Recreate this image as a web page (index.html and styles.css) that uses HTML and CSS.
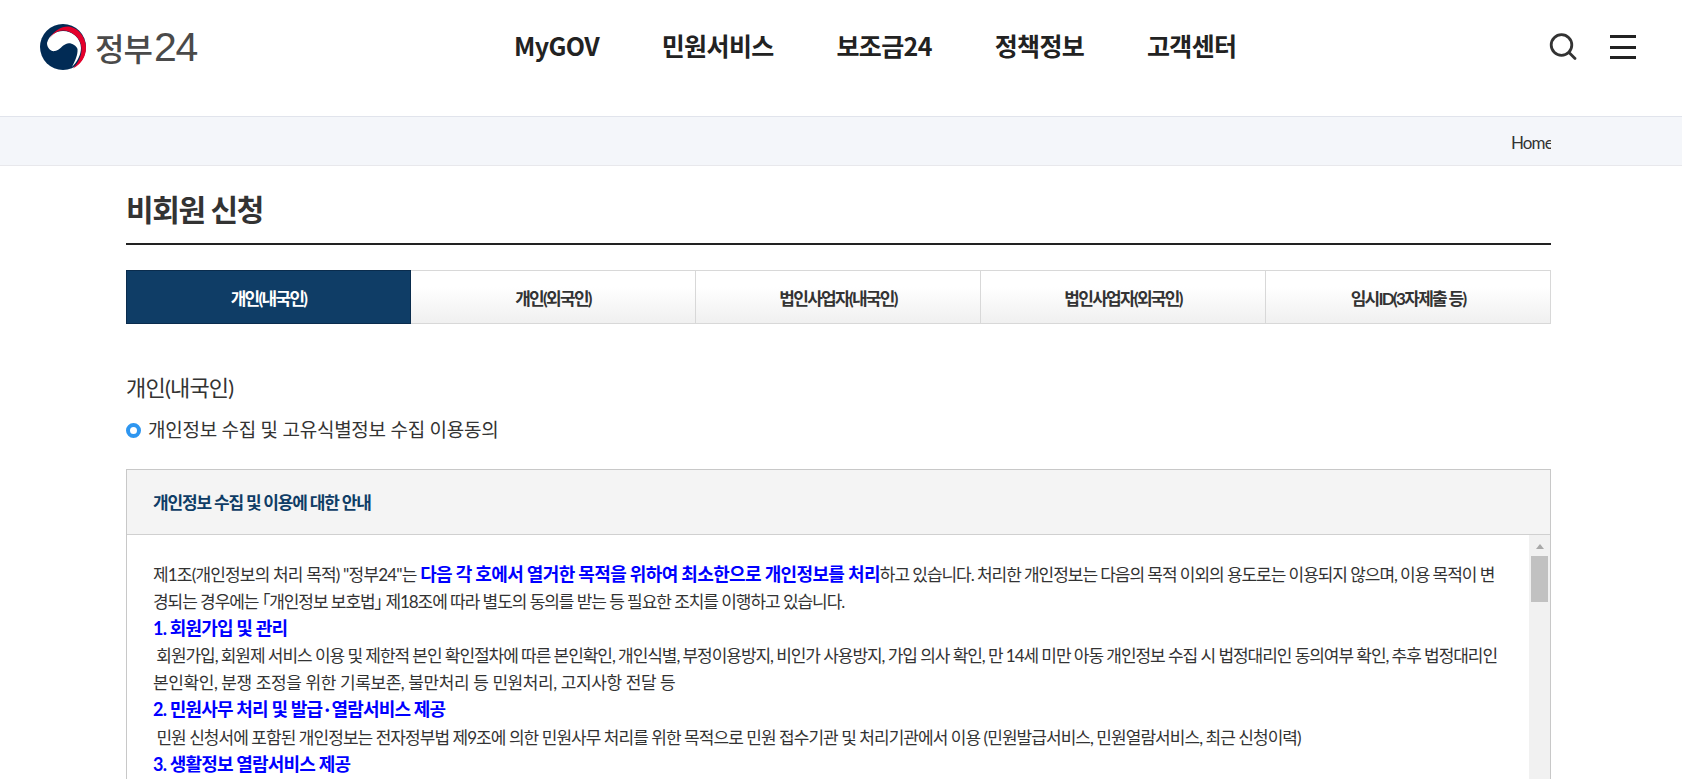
FILE: index.html
```html
<!DOCTYPE html>
<html lang="ko">
<head>
<meta charset="utf-8">
<title>비회원 신청 | 정부24</title>
<link rel="stylesheet" href="styles.css">
</head>
<body>
<header class="site-header">
  <a class="logo" href="#">
    <svg class="logo-mark" width="54" height="54" viewBox="0 0 54 54">
      <circle cx="27" cy="27" r="23" fill="#012b55"/>
      <path d="M11 23 C13 15 20 11 27 11 C36 11 45 18 45 28 C45 35 41 42 36 47 C39 41 42 35 41.500 29 C40 25 34 22 30 24 C26 25.500 24 30 19 31 C15 32 11 28 11 23 Z" fill="#fff"/>
      <path d="M13 19.500 C18 10 26 6 33 6.500 C43 8 50 18 50 28 C50 37 45 44 37 48.500 C42 43 46 36 45.500 28 C45 17 35 10.500 27 10.500 C21 10.500 16 14.500 13 19.500 Z" fill="#e4002b"/>
    </svg>
    <span class="logo-text">정부<span class="logo-num">24</span></span>
  </a>
  <nav class="gnb">
    <a href="#">MyGOV</a>
    <a href="#">민원서비스</a>
    <a href="#">보조금24</a>
    <a href="#">정책정보</a>
    <a href="#">고객센터</a>
  </nav>
  <div class="header-tools">
    <svg width="28" height="28" viewBox="0 0 28 28" fill="none" stroke="#333" stroke-width="2.800">
      <circle cx="12.500" cy="12" r="10.300"/>
      <path d="M20 19.500 L26 25.500" stroke-linecap="round"/>
    </svg>
    <div class="hamburger"><i></i><i></i><i></i></div>
  </div>
</header>
<div class="crumb-bar"><div class="crumb-inner">Home</div></div>
<main class="content">
  <h1 class="page-title">비회원 신청</h1>
  <ul class="tabs">
    <li class="tab active">개인(내국인)</li>
    <li class="tab">개인(외국인)</li>
    <li class="tab">법인사업자(내국인)</li>
    <li class="tab">법인사업자(외국인)</li>
    <li class="tab">임시ID(3자제출 등)</li>
  </ul>
  <h2 class="sec-title">개인(내국인)</h2>
  <h3 class="sub-title"><span class="bullet"></span>개인정보 수집 및 고유식별정보 수집 이용동의</h3>
  <section class="terms">
    <div class="terms-head">개인정보 수집 및 이용에 대한 안내</div>
    <div class="terms-body">
      <div class="terms-text">
        <p class="lead">제1조(개인정보의 처리 목적) "정부24"는 <b>다음 각 호에서 열거한 목적을 위하여 최소한으로 개인정보를 처리</b><span class="lead-rest">하고 있습니다. 처리한 개인정보는 다음의 목적 이외의 용도로는 이용되지 않으며, 이용 목적이 변경되는 경우에는 <span class="cjk-mark">「</span>개인정보 보호법<span class="cjk-mark">」</span> 제18조에 따라 별도의 동의를 받는 등 필요한 조치를 이행하고 있습니다.</span></p>
        <p><b class="item">1. 회원가입 및 관리</b></p>
        <p class="tight">&nbsp;회원가입, 회원제 서비스 이용 및 제한적 본인 확인절차에 따른 본인확인, 개인식별, 부정이용방지, 비인가 사용방지, 가입 의사 확인, 만 14세 미만 아동 개인정보 수집 시 법정대리인 동의여부 확인, 추후 법정대리인 <span class="loose">본인확인, 분쟁 조정을 위한 기록보존, 불만처리 등 민원처리, 고지사항 전달 등</span></p>
        <p><b class="item">2. 민원사무 처리 및 발급<span class="dot">·</span>열람서비스 제공</b></p>
        <p>&nbsp;민원 신청서에 포함된 개인정보는 전자정부법 제9조에 의한 민원사무 처리를 위한 목적으로 민원 접수기관 및 처리기관에서 이용 (민원발급서비스, 민원열람서비스, 최근 신청이력)</p>
        <p><b class="item">3. 생활정보 열람서비스 제공</b></p>
      </div>
      <div class="scrollbar"><span class="arrow"></span><span class="thumb"></span></div>
    </div>
  </section>
</main>
</body>
</html>
```
FILE: styles.css
```css
* { box-sizing: border-box; }
html, body { margin: 0; height: 779px; overflow: hidden; background: #fff; }
body { font-family: Lato, "Noto Sans CJK KR", sans-serif; color: #333; }
a { color: inherit; text-decoration: none; }
h1, h2, h3, p, ul { margin: 0; padding: 0; }
ul { list-style: none; }

.site-header { height: 116px; display: flex; align-items: flex-start; position: relative; }
.logo { display: flex; align-items: center; margin: 20px 0 0 36px; width: 464px; }
.logo-mark { display: block; }
.logo-text { margin-left: 5px; font-family: "Noto Sans CJK KR", sans-serif; font-size: 32px; font-weight: 500; line-height: 50px; letter-spacing: -1px; color: #4a4a4a; }
.logo-num { font-family: "Liberation Sans", sans-serif; font-size: 41px; font-weight: 400; letter-spacing: -1.200px; margin-left: 2px; }
.gnb { display: flex; gap: 62.700px; margin: 24px 0 0 14px; font-family: "Noto Sans CJK KR", sans-serif; font-size: 25px; line-height: 42px; font-weight: 700; color: #222; letter-spacing: -0.600px; }
.header-tools { display: flex; align-items: center; gap: 33px; margin-left: auto; margin-right: 46px; margin-top: 33px; }
.hamburger { width: 26px; height: 24px; display: flex; flex-direction: column; justify-content: space-between; }
.hamburger i { display: block; height: 3px; background: #222; }

.crumb-bar { height: 50px; background: #f4f6fa; border-top: 1px solid #e1e4ec; border-bottom: 1px solid #e8e8ec; }
.crumb-inner { width: 1425px; height: 48px; margin-left: 126px; padding-left: 1385px; overflow: hidden; white-space: nowrap; font-size: 17px; line-height: 51px; letter-spacing: -0.900px; color: #333; }

.content { width: 1425px; margin-left: 126px; }
.page-title { height: 79px; padding-top: 22px; font-size: 30px; line-height: 42px; font-weight: 700; letter-spacing: -1.400px; color: #333; border-bottom: 2px solid #222; }
.tabs { display: grid; grid-template-columns: repeat(5, 1fr); margin-top: 25px; height: 54px; }
.tab { display: flex; align-items: center; justify-content: center; font-size: 17px; font-weight: 700; letter-spacing: -1.700px; color: #333; border: 1px solid #d8d8d8; border-left: 0; background: linear-gradient(#fff 30%, #f0f0f0); }
.tab.active { background: #0f3d66; border: 1px solid #0a2c4d; color: #fff; }
.sec-title { margin-top: 48px; font-size: 22px; line-height: 32px; font-weight: 400; letter-spacing: -0.800px; color: #333; }
.sub-title { display: flex; align-items: center; margin-top: 11px; font-size: 19px; line-height: 30px; font-weight: 400; letter-spacing: -0.250px; color: #333; }
.bullet { width: 15px; height: 15px; margin-right: 7px; border: 4px solid #2e96f0; border-radius: 50%; background: #fff; }
.terms { margin-top: 24px; border: 1px solid #c8c8c8; height: 400px; }
.terms-head { height: 65px; padding-left: 26px; background: #f4f4f4; border-bottom: 1px solid #d0d0d0; font-size: 17px; line-height: 65px; font-weight: 700; letter-spacing: -1.150px; color: #0f3d66; }
.terms-body { display: flex; height: 334px; }
.terms-text { flex: 1; padding: 26px 26px 0 26px; font-size: 17px; line-height: 27.100px; letter-spacing: -0.950px; color: #333; word-break: break-all; }
.lead { letter-spacing: -0.820px; }
.lead b { font-size: 18px; letter-spacing: -0.640px; }
.lead-rest { letter-spacing: -1.050px; }
.tight { letter-spacing: -1.050px; }
.loose { letter-spacing: -0.400px; }
.cjk-mark { font-feature-settings: "palt"; }
.terms-text b { font-weight: 700; color: #0000ff; }
.terms-text b.item { font-size: 18px; letter-spacing: -0.800px; }
.dot { padding: 0 2.500px; }
.scrollbar { width: 21px; background: #f1f1f1; position: relative; padding: 0 2px; }
.arrow { display: block; margin: 9px auto 0; width: 0; height: 0; border-left: 4.500px solid transparent; border-right: 4.500px solid transparent; border-bottom: 5px solid #a8a8a8; }
.thumb { display: block; margin-top: 7px; height: 46px; background: #c1c1c1; }
```
